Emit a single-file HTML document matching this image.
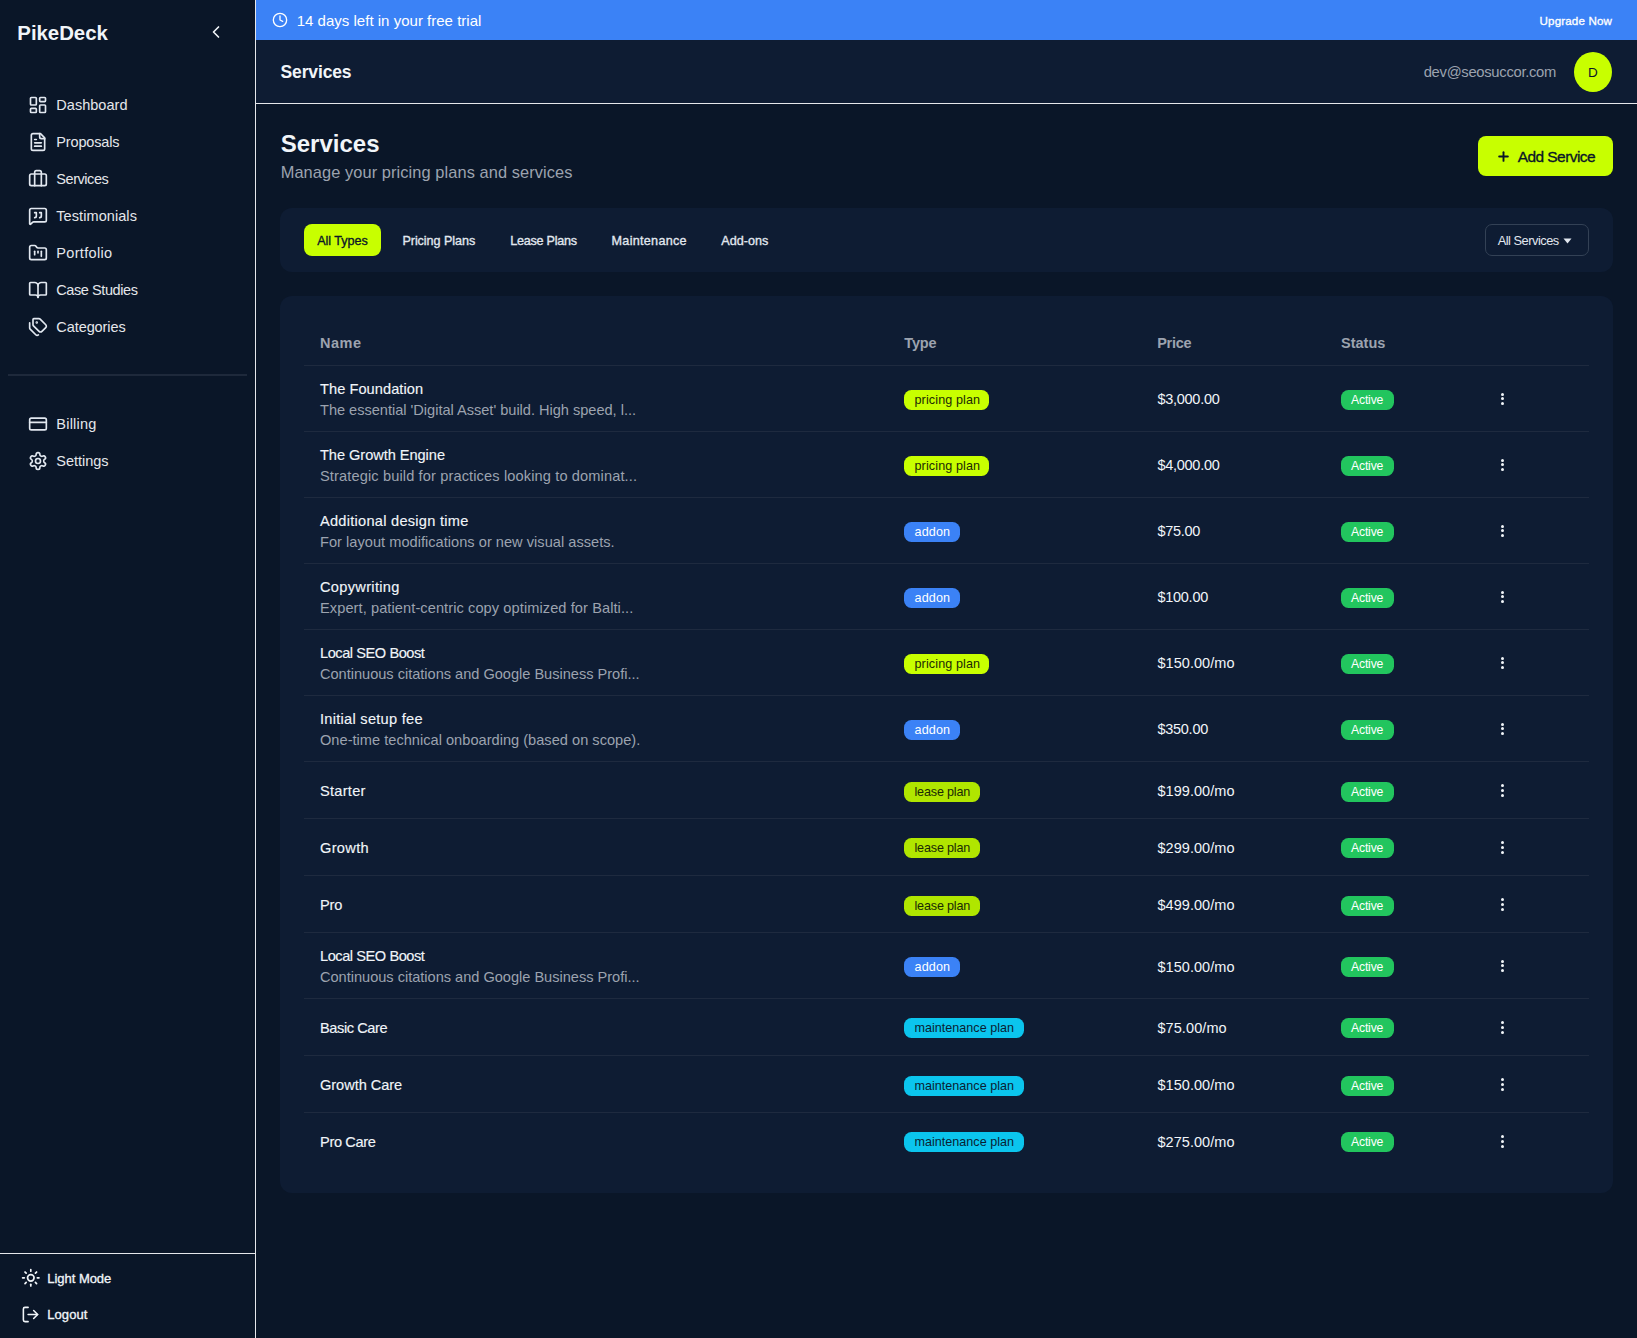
<!DOCTYPE html>
<html><head><meta charset="utf-8"><title>Services</title>
<style>
html,body{margin:0;padding:0;}
body{width:1637px;height:1338px;overflow:hidden;position:relative;background:#0a1628;font-family:"Liberation Sans",sans-serif;}
.t{position:absolute;line-height:1;white-space:nowrap;}
.b{position:absolute;}
</style></head><body>
<div class="b" style="left:0px;top:0px;width:255px;height:1338px;background:#0a1628;"></div>
<div class="b" style="left:255px;top:0px;width:1px;height:1338px;background:#e5e7eb;"></div>
<div class="t" style="left:17.3px;top:23.00px;font-size:20.4px;font-weight:700;color:#f1f5f9;letter-spacing:-0.019px;">PikeDeck</div>
<svg class="b" style="left:206px;top:22px;color:#f1f5f9;" width="20" height="20" viewBox="0 0 24 24" fill="none" stroke="#f1f5f9" stroke-width="2" stroke-linecap="round" stroke-linejoin="round"><path d="m15 18-6-6 6-6"/></svg>
<svg class="b" style="left:28px;top:95px;color:#e2e8f0;" width="20" height="20" viewBox="0 0 24 24" fill="none" stroke="#e2e8f0" stroke-width="2" stroke-linecap="round" stroke-linejoin="round"><rect width="7" height="9" x="3" y="3" rx="1"/><rect width="7" height="5" x="14" y="3" rx="1"/><rect width="7" height="9" x="14" y="12" rx="1"/><rect width="7" height="5" x="3" y="16" rx="1"/></svg>
<div class="t" style="left:56.3px;top:98.00px;font-size:14.5px;color:#e5e7eb;letter-spacing:0.03px;">Dashboard</div>
<svg class="b" style="left:28px;top:132px;color:#e2e8f0;" width="20" height="20" viewBox="0 0 24 24" fill="none" stroke="#e2e8f0" stroke-width="2" stroke-linecap="round" stroke-linejoin="round"><path d="M15 2H6a2 2 0 0 0-2 2v16a2 2 0 0 0 2 2h12a2 2 0 0 0 2-2V7Z"/><path d="M14 2v4a2 2 0 0 0 2 2h4"/><path d="M10 9H8"/><path d="M16 13H8"/><path d="M16 17H8"/></svg>
<div class="t" style="left:56.3px;top:135.00px;font-size:14.5px;color:#e5e7eb;letter-spacing:-0.154px;">Proposals</div>
<svg class="b" style="left:28px;top:169px;color:#e2e8f0;" width="20" height="20" viewBox="0 0 24 24" fill="none" stroke="#e2e8f0" stroke-width="2" stroke-linecap="round" stroke-linejoin="round"><path d="M16 20V4a2 2 0 0 0-2-2h-4a2 2 0 0 0-2 2v16"/><rect width="20" height="14" x="2" y="6" rx="2"/></svg>
<div class="t" style="left:56.3px;top:172.00px;font-size:14.5px;color:#e5e7eb;letter-spacing:-0.449px;">Services</div>
<svg class="b" style="left:28px;top:206px;color:#e2e8f0;" width="20" height="20" viewBox="0 0 24 24" fill="none" stroke="#e2e8f0" stroke-width="2" stroke-linecap="round" stroke-linejoin="round"><path d="M14 14a2 2 0 0 0 2-2V8h-2"/><path d="M22 17a2 2 0 0 1-2 2H6.828a2 2 0 0 0-1.414.586l-2.202 2.202A.71.71 0 0 1 2 21.286V5a2 2 0 0 1 2-2h16a2 2 0 0 1 2 2z"/><path d="M8 14a2 2 0 0 0 2-2V8H8"/></svg>
<div class="t" style="left:56.3px;top:209.00px;font-size:14.5px;color:#e5e7eb;letter-spacing:0.075px;">Testimonials</div>
<svg class="b" style="left:28px;top:243px;color:#e2e8f0;" width="20" height="20" viewBox="0 0 24 24" fill="none" stroke="#e2e8f0" stroke-width="2" stroke-linecap="round" stroke-linejoin="round"><path d="M4 20h16a2 2 0 0 0 2-2V8a2 2 0 0 0-2-2h-7.93a2 2 0 0 1-1.66-.9l-.82-1.2A2 2 0 0 0 7.93 3H4a2 2 0 0 0-2 2v13c0 1.1.9 2 2 2Z"/><path d="M8 10v4"/><path d="M12 10v2"/><path d="M16 10v6"/></svg>
<div class="t" style="left:56.3px;top:246.00px;font-size:14.5px;color:#e5e7eb;letter-spacing:0.319px;">Portfolio</div>
<svg class="b" style="left:28px;top:280px;color:#e2e8f0;" width="20" height="20" viewBox="0 0 24 24" fill="none" stroke="#e2e8f0" stroke-width="2" stroke-linecap="round" stroke-linejoin="round"><path d="M12 7v14"/><path d="M3 18a1 1 0 0 1-1-1V4a1 1 0 0 1 1-1h5a4 4 0 0 1 4 4 4 4 0 0 1 4-4h5a1 1 0 0 1 1 1v13a1 1 0 0 1-1 1h-6a3 3 0 0 0-3 3 3 3 0 0 0-3-3z"/></svg>
<div class="t" style="left:56.3px;top:283.00px;font-size:14.5px;color:#e5e7eb;letter-spacing:-0.415px;">Case Studies</div>
<svg class="b" style="left:28px;top:317px;color:#e2e8f0;" width="20" height="20" viewBox="0 0 24 24" fill="none" stroke="#e2e8f0" stroke-width="2" stroke-linecap="round" stroke-linejoin="round"><path d="M13.172 2a2 2 0 0 1 1.414.586l6.71 6.71a2.4 2.4 0 0 1 0 3.408l-4.592 4.592a2.4 2.4 0 0 1-3.408 0l-6.71-6.71A2 2 0 0 1 6 9.172V3a1 1 0 0 1 1-1z"/><path d="M2 7v6.172a2 2 0 0 0 .586 1.414l6.71 6.71a2.4 2.4 0 0 0 3.191.193"/><circle cx="10.5" cy="6.5" r=".5" fill="currentColor"/></svg>
<div class="t" style="left:56.3px;top:320.00px;font-size:14.5px;color:#e5e7eb;letter-spacing:-0.073px;">Categories</div>
<div class="b" style="left:8px;top:374px;width:239px;height:2px;background:#1e293b;"></div>
<svg class="b" style="left:28px;top:414px;color:#e2e8f0;" width="20" height="20" viewBox="0 0 24 24" fill="none" stroke="#e2e8f0" stroke-width="2" stroke-linecap="round" stroke-linejoin="round"><rect width="20" height="14" x="2" y="5" rx="2"/><line x1="2" x2="22" y1="10" y2="10"/></svg>
<div class="t" style="left:56.3px;top:417.00px;font-size:14.5px;color:#e5e7eb;letter-spacing:0.232px;">Billing</div>
<svg class="b" style="left:28px;top:451px;color:#e2e8f0;" width="20" height="20" viewBox="0 0 24 24" fill="none" stroke="#e2e8f0" stroke-width="2" stroke-linecap="round" stroke-linejoin="round"><path d="M12.22 2h-.44a2 2 0 0 0-2 2v.18a2 2 0 0 1-1 1.73l-.43.25a2 2 0 0 1-2 0l-.15-.08a2 2 0 0 0-2.73.73l-.22.38a2 2 0 0 0 .73 2.73l.15.1a2 2 0 0 1 1 1.72v.51a2 2 0 0 1-1 1.74l-.15.09a2 2 0 0 0-.73 2.73l.22.38a2 2 0 0 0 2.73.73l.15-.08a2 2 0 0 1 2 0l.43.25a2 2 0 0 1 1 1.73V20a2 2 0 0 0 2 2h.44a2 2 0 0 0 2-2v-.18a2 2 0 0 1 1-1.73l.43-.25a2 2 0 0 1 2 0l.15.08a2 2 0 0 0 2.73-.73l.22-.39a2 2 0 0 0-.73-2.73l-.15-.08a2 2 0 0 1-1-1.74v-.5a2 2 0 0 1 1-1.74l.15-.09a2 2 0 0 0 .73-2.73l-.22-.38a2 2 0 0 0-2.73-.73l-.15.08a2 2 0 0 1-2 0l-.43-.25a2 2 0 0 1-1-1.73V4a2 2 0 0 0-2-2z"/><circle cx="12" cy="12" r="3"/></svg>
<div class="t" style="left:56.3px;top:454.00px;font-size:14.5px;color:#e5e7eb;letter-spacing:-0.01px;">Settings</div>
<div class="b" style="left:0px;top:1253px;width:255px;height:1px;background:#e5e7eb;"></div>
<svg class="b" style="left:20.9px;top:1267.8px;color:#f1f5f9;" width="19.6" height="19.6" viewBox="0 0 24 24" fill="none" stroke="#f1f5f9" stroke-width="2.1" stroke-linecap="round" stroke-linejoin="round"><circle cx="12" cy="12" r="4"/><path d="M12 2v2"/><path d="M12 20v2"/><path d="m4.93 4.93 1.41 1.41"/><path d="m17.66 17.66 1.41 1.41"/><path d="M2 12h2"/><path d="M20 12h2"/><path d="m6.34 17.66-1.41 1.41"/><path d="m19.07 4.93-1.41 1.41"/></svg>
<div class="t" style="left:47.3px;top:1272.00px;font-size:13px;-webkit-text-stroke:0.32px #f1f5f9;color:#f1f5f9;letter-spacing:-0.036px;">Light Mode</div>
<svg class="b" style="left:21.2px;top:1304.6px;color:#f1f5f9;" width="19" height="19" viewBox="0 0 24 24" fill="none" stroke="#f1f5f9" stroke-width="2" stroke-linecap="round" stroke-linejoin="round"><path d="M9 21H5a2 2 0 0 1-2-2V5a2 2 0 0 1 2-2h4"/><polyline points="16 17 21 12 16 7"/><line x1="21" x2="9" y1="12" y2="12"/></svg>
<div class="t" style="left:47.3px;top:1308.00px;font-size:13px;-webkit-text-stroke:0.32px #f1f5f9;color:#f1f5f9;letter-spacing:0.048px;">Logout</div>
<div class="b" style="left:256px;top:0px;width:1381px;height:40px;background:#3b82f6;"></div>
<svg class="b" style="left:271.5px;top:12px;color:#ffffff;" width="16" height="16" viewBox="0 0 24 24" fill="none" stroke="#ffffff" stroke-width="2" stroke-linecap="round" stroke-linejoin="round"><circle cx="12" cy="12" r="10"/><polyline points="12 6 12 12 16 14"/></svg>
<div class="t" style="left:296.7px;top:13.00px;font-size:15px;color:#ffffff;letter-spacing:0.015px;">14 days left in your free trial</div>
<div class="t" style="left:1539.6px;top:15.00px;font-size:11.6px;-webkit-text-stroke:0.32px #ffffff;color:#ffffff;letter-spacing:0.137px;">Upgrade Now</div>
<div class="b" style="left:256px;top:40px;width:1381px;height:63px;background:#0e1c33;"></div>
<div class="b" style="left:256px;top:103px;width:1381px;height:1px;background:#e5e7eb;"></div>
<div class="t" style="left:280.5px;top:64.00px;font-size:17.5px;font-weight:700;color:#f1f5f9;letter-spacing:-0.13px;">Services</div>
<div class="t" style="left:1423.7px;top:65.00px;font-size:14.8px;color:#9ca3af;letter-spacing:-0.306px;">dev@seosuccor.com</div>
<div class="b" style="left:1574px;top:52px;width:38px;height:40px;background:#c8ff00;border-radius:50%;"></div>
<div class="t" style="left:1588.1px;top:66.00px;font-size:13.5px;color:#0a1628;">D</div>
<div class="t" style="left:280.7px;top:132.00px;font-size:24px;font-weight:700;color:#f1f5f9;letter-spacing:0.006px;">Services</div>
<div class="t" style="left:280.7px;top:164.00px;font-size:16.4px;color:#9ca3af;letter-spacing:0.079px;">Manage your pricing plans and services</div>
<div class="b" style="left:1478px;top:136px;width:135px;height:40px;background:#c8ff00;border-radius:8px;"></div>
<svg class="b" style="left:1495.5px;top:148.7px;color:#0a1628;" width="15" height="15" viewBox="0 0 24 24" fill="none" stroke="#0a1628" stroke-width="3" stroke-linecap="round" stroke-linejoin="round"><path d="M5 12h14"/><path d="M12 5v14"/></svg>
<div class="t" style="left:1517.7px;top:149.00px;font-size:15.5px;-webkit-text-stroke:0.32px #0a1628;color:#0a1628;letter-spacing:-0.567px;">Add Service</div>
<div class="b" style="left:280px;top:208px;width:1333px;height:64px;background:#0e1c33;border-radius:12px;"></div>
<div class="b" style="left:304px;top:224px;width:77px;height:32px;background:#c8ff00;border-radius:8px;"></div>
<div class="t" style="left:317.2px;top:235.00px;font-size:12.6px;-webkit-text-stroke:0.32px #0a1628;color:#0a1628;letter-spacing:-0.037px;">All Types</div>
<div class="t" style="left:402.4px;top:235.00px;font-size:12.6px;-webkit-text-stroke:0.32px #e2e8f0;color:#e2e8f0;letter-spacing:-0.053px;">Pricing Plans</div>
<div class="t" style="left:510.3px;top:235.00px;font-size:12.6px;-webkit-text-stroke:0.32px #e2e8f0;color:#e2e8f0;letter-spacing:-0.265px;">Lease Plans</div>
<div class="t" style="left:611.6px;top:235.00px;font-size:12.6px;-webkit-text-stroke:0.32px #e2e8f0;color:#e2e8f0;letter-spacing:0.285px;">Maintenance</div>
<div class="t" style="left:721.2px;top:235.00px;font-size:12.6px;-webkit-text-stroke:0.32px #e2e8f0;color:#e2e8f0;letter-spacing:0.045px;">Add-ons</div>
<div class="b" style="left:1485px;top:224px;width:104px;height:32px;background:transparent;border-radius:7px;box-sizing:border-box;border:1px solid #334155;"></div>
<div class="t" style="left:1497.7px;top:235.00px;font-size:12.8px;color:#e2e8f0;letter-spacing:-0.479px;">All Services</div>
<svg class="b" style="left:1563px;top:238px" width="9" height="6" viewBox="0 0 9 6"><path d="M0.5 0.5h8L4.5 5.5z" fill="#e2e8f0"/></svg>
<div class="b" style="left:280px;top:296px;width:1333px;height:897px;background:#0e1c33;border-radius:12px;"></div>
<div class="t" style="left:320px;top:336.00px;font-size:14.5px;font-weight:700;color:#9ca3af;letter-spacing:0.502px;">Name</div>
<div class="t" style="left:904.2px;top:336.00px;font-size:14.5px;font-weight:700;color:#9ca3af;letter-spacing:-0.089px;">Type</div>
<div class="t" style="left:1157.2px;top:336.00px;font-size:14.5px;font-weight:700;color:#9ca3af;letter-spacing:-0.268px;">Price</div>
<div class="t" style="left:1341px;top:336.00px;font-size:14.5px;font-weight:700;color:#9ca3af;letter-spacing:-0.003px;">Status</div>
<div class="b" style="left:304px;top:365px;width:1285px;height:1px;background:#1e2a3f;"></div>
<div class="t" style="left:320px;top:382.00px;font-size:14.6px;-webkit-text-stroke:0.14px #f1f5f9;color:#f1f5f9;letter-spacing:0.064px;">The Foundation</div>
<div class="t" style="left:320px;top:403.00px;font-size:14.6px;color:#9ca3af;letter-spacing:-0.02px;">The essential &#x27;Digital Asset&#x27; build. High speed, l...</div>
<div class="b" style="left:904px;top:390px;width:85px;height:20px;background:#c8ff00;border-radius:7.5px;"></div>
<div class="t" style="left:914.5px;top:394.00px;font-size:12.6px;color:#1a2a05;letter-spacing:0.109px;">pricing plan</div>
<div class="t" style="left:1157.4px;top:392.00px;font-size:14.5px;color:#f1f5f9;letter-spacing:-0.261px;">$3,000.00</div>
<div class="b" style="left:1341px;top:390px;width:53px;height:20px;background:#22c55e;border-radius:7.5px;"></div>
<div class="t" style="left:1351px;top:394.00px;font-size:12.2px;color:#ffffff;letter-spacing:-0.165px;">Active</div>
<div class="b" style="left:1501.0px;top:392.75px;width:3px;height:3px;background:#f1f5f9;border-radius:2px;"></div>
<div class="b" style="left:1501.0px;top:397.4px;width:3px;height:3px;background:#f1f5f9;border-radius:2px;"></div>
<div class="b" style="left:1501.0px;top:402.04999999999995px;width:3px;height:3px;background:#f1f5f9;border-radius:2px;"></div>
<div class="b" style="left:304px;top:431px;width:1285px;height:1px;background:#1e2a3f;"></div>
<div class="t" style="left:320px;top:448.00px;font-size:14.6px;-webkit-text-stroke:0.14px #f1f5f9;color:#f1f5f9;letter-spacing:-0.046px;">The Growth Engine</div>
<div class="t" style="left:320px;top:469.00px;font-size:14.6px;color:#9ca3af;letter-spacing:0.127px;">Strategic build for practices looking to dominat...</div>
<div class="b" style="left:904px;top:456px;width:85px;height:20px;background:#c8ff00;border-radius:7.5px;"></div>
<div class="t" style="left:914.5px;top:460.00px;font-size:12.6px;color:#1a2a05;letter-spacing:0.109px;">pricing plan</div>
<div class="t" style="left:1157.4px;top:458.00px;font-size:14.5px;color:#f1f5f9;letter-spacing:-0.261px;">$4,000.00</div>
<div class="b" style="left:1341px;top:456px;width:53px;height:20px;background:#22c55e;border-radius:7.5px;"></div>
<div class="t" style="left:1351px;top:460.00px;font-size:12.2px;color:#ffffff;letter-spacing:-0.165px;">Active</div>
<div class="b" style="left:1501.0px;top:458.75px;width:3px;height:3px;background:#f1f5f9;border-radius:2px;"></div>
<div class="b" style="left:1501.0px;top:463.4px;width:3px;height:3px;background:#f1f5f9;border-radius:2px;"></div>
<div class="b" style="left:1501.0px;top:468.04999999999995px;width:3px;height:3px;background:#f1f5f9;border-radius:2px;"></div>
<div class="b" style="left:304px;top:497px;width:1285px;height:1px;background:#1e2a3f;"></div>
<div class="t" style="left:320px;top:514.00px;font-size:14.6px;-webkit-text-stroke:0.14px #f1f5f9;color:#f1f5f9;letter-spacing:0.261px;">Additional design time</div>
<div class="t" style="left:320px;top:535.00px;font-size:14.6px;color:#9ca3af;letter-spacing:0.023px;">For layout modifications or new visual assets.</div>
<div class="b" style="left:904px;top:522px;width:56px;height:20px;background:#3b82f6;border-radius:7.5px;"></div>
<div class="t" style="left:914.5px;top:526.00px;font-size:12.6px;color:#ffffff;letter-spacing:0.121px;">addon</div>
<div class="t" style="left:1157.4px;top:524.00px;font-size:14.5px;color:#f1f5f9;letter-spacing:-0.268px;">$75.00</div>
<div class="b" style="left:1341px;top:522px;width:53px;height:20px;background:#22c55e;border-radius:7.5px;"></div>
<div class="t" style="left:1351px;top:526.00px;font-size:12.2px;color:#ffffff;letter-spacing:-0.165px;">Active</div>
<div class="b" style="left:1501.0px;top:524.75px;width:3px;height:3px;background:#f1f5f9;border-radius:2px;"></div>
<div class="b" style="left:1501.0px;top:529.4px;width:3px;height:3px;background:#f1f5f9;border-radius:2px;"></div>
<div class="b" style="left:1501.0px;top:534.05px;width:3px;height:3px;background:#f1f5f9;border-radius:2px;"></div>
<div class="b" style="left:304px;top:563px;width:1285px;height:1px;background:#1e2a3f;"></div>
<div class="t" style="left:320px;top:580.00px;font-size:14.6px;-webkit-text-stroke:0.14px #f1f5f9;color:#f1f5f9;letter-spacing:0.311px;">Copywriting</div>
<div class="t" style="left:320px;top:601.00px;font-size:14.6px;color:#9ca3af;letter-spacing:0.085px;">Expert, patient-centric copy optimized for Balti...</div>
<div class="b" style="left:904px;top:588px;width:56px;height:20px;background:#3b82f6;border-radius:7.5px;"></div>
<div class="t" style="left:914.5px;top:592.00px;font-size:12.6px;color:#ffffff;letter-spacing:0.121px;">addon</div>
<div class="t" style="left:1157.4px;top:590.00px;font-size:14.5px;color:#f1f5f9;letter-spacing:-0.256px;">$100.00</div>
<div class="b" style="left:1341px;top:588px;width:53px;height:20px;background:#22c55e;border-radius:7.5px;"></div>
<div class="t" style="left:1351px;top:592.00px;font-size:12.2px;color:#ffffff;letter-spacing:-0.165px;">Active</div>
<div class="b" style="left:1501.0px;top:590.75px;width:3px;height:3px;background:#f1f5f9;border-radius:2px;"></div>
<div class="b" style="left:1501.0px;top:595.4px;width:3px;height:3px;background:#f1f5f9;border-radius:2px;"></div>
<div class="b" style="left:1501.0px;top:600.05px;width:3px;height:3px;background:#f1f5f9;border-radius:2px;"></div>
<div class="b" style="left:304px;top:629px;width:1285px;height:1px;background:#1e2a3f;"></div>
<div class="t" style="left:320px;top:646.00px;font-size:14.6px;-webkit-text-stroke:0.14px #f1f5f9;color:#f1f5f9;letter-spacing:-0.444px;">Local SEO Boost</div>
<div class="t" style="left:320px;top:667.00px;font-size:14.6px;color:#9ca3af;letter-spacing:-0.019px;">Continuous citations and Google Business Profi...</div>
<div class="b" style="left:904px;top:654px;width:85px;height:20px;background:#c8ff00;border-radius:7.5px;"></div>
<div class="t" style="left:914.5px;top:658.00px;font-size:12.6px;color:#1a2a05;letter-spacing:0.109px;">pricing plan</div>
<div class="t" style="left:1157.4px;top:656.00px;font-size:14.5px;color:#f1f5f9;letter-spacing:0.064px;">$150.00/mo</div>
<div class="b" style="left:1341px;top:654px;width:53px;height:20px;background:#22c55e;border-radius:7.5px;"></div>
<div class="t" style="left:1351px;top:658.00px;font-size:12.2px;color:#ffffff;letter-spacing:-0.165px;">Active</div>
<div class="b" style="left:1501.0px;top:656.75px;width:3px;height:3px;background:#f1f5f9;border-radius:2px;"></div>
<div class="b" style="left:1501.0px;top:661.4px;width:3px;height:3px;background:#f1f5f9;border-radius:2px;"></div>
<div class="b" style="left:1501.0px;top:666.05px;width:3px;height:3px;background:#f1f5f9;border-radius:2px;"></div>
<div class="b" style="left:304px;top:695px;width:1285px;height:1px;background:#1e2a3f;"></div>
<div class="t" style="left:320px;top:712.00px;font-size:14.6px;-webkit-text-stroke:0.14px #f1f5f9;color:#f1f5f9;letter-spacing:0.274px;">Initial setup fee</div>
<div class="t" style="left:320px;top:733.00px;font-size:14.6px;color:#9ca3af;letter-spacing:0.014px;">One-time technical onboarding (based on scope).</div>
<div class="b" style="left:904px;top:720px;width:56px;height:20px;background:#3b82f6;border-radius:7.5px;"></div>
<div class="t" style="left:914.5px;top:724.00px;font-size:12.6px;color:#ffffff;letter-spacing:0.121px;">addon</div>
<div class="t" style="left:1157.4px;top:722.00px;font-size:14.5px;color:#f1f5f9;letter-spacing:-0.256px;">$350.00</div>
<div class="b" style="left:1341px;top:720px;width:53px;height:20px;background:#22c55e;border-radius:7.5px;"></div>
<div class="t" style="left:1351px;top:724.00px;font-size:12.2px;color:#ffffff;letter-spacing:-0.165px;">Active</div>
<div class="b" style="left:1501.0px;top:722.75px;width:3px;height:3px;background:#f1f5f9;border-radius:2px;"></div>
<div class="b" style="left:1501.0px;top:727.4px;width:3px;height:3px;background:#f1f5f9;border-radius:2px;"></div>
<div class="b" style="left:1501.0px;top:732.05px;width:3px;height:3px;background:#f1f5f9;border-radius:2px;"></div>
<div class="b" style="left:304px;top:761px;width:1285px;height:1px;background:#1e2a3f;"></div>
<div class="t" style="left:320px;top:784.00px;font-size:14.6px;-webkit-text-stroke:0.14px #f1f5f9;color:#f1f5f9;letter-spacing:0.277px;">Starter</div>
<div class="b" style="left:904px;top:782px;width:76px;height:20px;background:#b0e600;border-radius:7.5px;"></div>
<div class="t" style="left:914.5px;top:786.00px;font-size:12.6px;color:#1a2a05;letter-spacing:-0.179px;">lease plan</div>
<div class="t" style="left:1157.4px;top:784.00px;font-size:14.5px;color:#f1f5f9;letter-spacing:0.064px;">$199.00/mo</div>
<div class="b" style="left:1341px;top:782px;width:53px;height:20px;background:#22c55e;border-radius:7.5px;"></div>
<div class="t" style="left:1351px;top:786.00px;font-size:12.2px;color:#ffffff;letter-spacing:-0.165px;">Active</div>
<div class="b" style="left:1501.0px;top:784.25px;width:3px;height:3px;background:#f1f5f9;border-radius:2px;"></div>
<div class="b" style="left:1501.0px;top:788.9px;width:3px;height:3px;background:#f1f5f9;border-radius:2px;"></div>
<div class="b" style="left:1501.0px;top:793.55px;width:3px;height:3px;background:#f1f5f9;border-radius:2px;"></div>
<div class="b" style="left:304px;top:818px;width:1285px;height:1px;background:#1e2a3f;"></div>
<div class="t" style="left:320px;top:841.00px;font-size:14.6px;-webkit-text-stroke:0.14px #f1f5f9;color:#f1f5f9;letter-spacing:0.319px;">Growth</div>
<div class="b" style="left:904px;top:838px;width:76px;height:20px;background:#b0e600;border-radius:7.5px;"></div>
<div class="t" style="left:914.5px;top:842.00px;font-size:12.6px;color:#1a2a05;letter-spacing:-0.179px;">lease plan</div>
<div class="t" style="left:1157.4px;top:841.00px;font-size:14.5px;color:#f1f5f9;letter-spacing:0.064px;">$299.00/mo</div>
<div class="b" style="left:1341px;top:838px;width:53px;height:20px;background:#22c55e;border-radius:7.5px;"></div>
<div class="t" style="left:1351px;top:842.00px;font-size:12.2px;color:#ffffff;letter-spacing:-0.165px;">Active</div>
<div class="b" style="left:1501.0px;top:841.25px;width:3px;height:3px;background:#f1f5f9;border-radius:2px;"></div>
<div class="b" style="left:1501.0px;top:845.9px;width:3px;height:3px;background:#f1f5f9;border-radius:2px;"></div>
<div class="b" style="left:1501.0px;top:850.55px;width:3px;height:3px;background:#f1f5f9;border-radius:2px;"></div>
<div class="b" style="left:304px;top:875px;width:1285px;height:1px;background:#1e2a3f;"></div>
<div class="t" style="left:320px;top:898.00px;font-size:14.6px;-webkit-text-stroke:0.14px #f1f5f9;color:#f1f5f9;letter-spacing:-0.19px;">Pro</div>
<div class="b" style="left:904px;top:896px;width:76px;height:20px;background:#b0e600;border-radius:7.5px;"></div>
<div class="t" style="left:914.5px;top:900.00px;font-size:12.6px;color:#1a2a05;letter-spacing:-0.179px;">lease plan</div>
<div class="t" style="left:1157.4px;top:898.00px;font-size:14.5px;color:#f1f5f9;letter-spacing:0.064px;">$499.00/mo</div>
<div class="b" style="left:1341px;top:896px;width:53px;height:20px;background:#22c55e;border-radius:7.5px;"></div>
<div class="t" style="left:1351px;top:900.00px;font-size:12.2px;color:#ffffff;letter-spacing:-0.165px;">Active</div>
<div class="b" style="left:1501.0px;top:898.25px;width:3px;height:3px;background:#f1f5f9;border-radius:2px;"></div>
<div class="b" style="left:1501.0px;top:902.9px;width:3px;height:3px;background:#f1f5f9;border-radius:2px;"></div>
<div class="b" style="left:1501.0px;top:907.55px;width:3px;height:3px;background:#f1f5f9;border-radius:2px;"></div>
<div class="b" style="left:304px;top:932px;width:1285px;height:1px;background:#1e2a3f;"></div>
<div class="t" style="left:320px;top:949.00px;font-size:14.6px;-webkit-text-stroke:0.14px #f1f5f9;color:#f1f5f9;letter-spacing:-0.444px;">Local SEO Boost</div>
<div class="t" style="left:320px;top:970.00px;font-size:14.6px;color:#9ca3af;letter-spacing:-0.019px;">Continuous citations and Google Business Profi...</div>
<div class="b" style="left:904px;top:957px;width:56px;height:20px;background:#3b82f6;border-radius:7.5px;"></div>
<div class="t" style="left:914.5px;top:961.00px;font-size:12.6px;color:#ffffff;letter-spacing:0.121px;">addon</div>
<div class="t" style="left:1157.4px;top:960.00px;font-size:14.5px;color:#f1f5f9;letter-spacing:0.064px;">$150.00/mo</div>
<div class="b" style="left:1341px;top:957px;width:53px;height:20px;background:#22c55e;border-radius:7.5px;"></div>
<div class="t" style="left:1351px;top:961.00px;font-size:12.2px;color:#ffffff;letter-spacing:-0.165px;">Active</div>
<div class="b" style="left:1501.0px;top:959.75px;width:3px;height:3px;background:#f1f5f9;border-radius:2px;"></div>
<div class="b" style="left:1501.0px;top:964.4px;width:3px;height:3px;background:#f1f5f9;border-radius:2px;"></div>
<div class="b" style="left:1501.0px;top:969.05px;width:3px;height:3px;background:#f1f5f9;border-radius:2px;"></div>
<div class="b" style="left:304px;top:998px;width:1285px;height:1px;background:#1e2a3f;"></div>
<div class="t" style="left:320px;top:1021.00px;font-size:14.6px;-webkit-text-stroke:0.14px #f1f5f9;color:#f1f5f9;letter-spacing:-0.422px;">Basic Care</div>
<div class="b" style="left:904px;top:1018px;width:120px;height:20px;background:#0bc5ee;border-radius:7.5px;"></div>
<div class="t" style="left:914.5px;top:1022.00px;font-size:12.6px;color:#0a1e33;letter-spacing:0.007px;">maintenance plan</div>
<div class="t" style="left:1157.4px;top:1021.00px;font-size:14.5px;color:#f1f5f9;letter-spacing:0.096px;">$75.00/mo</div>
<div class="b" style="left:1341px;top:1018px;width:53px;height:20px;background:#22c55e;border-radius:7.5px;"></div>
<div class="t" style="left:1351px;top:1022.00px;font-size:12.2px;color:#ffffff;letter-spacing:-0.165px;">Active</div>
<div class="b" style="left:1501.0px;top:1021.2500000000001px;width:3px;height:3px;background:#f1f5f9;border-radius:2px;"></div>
<div class="b" style="left:1501.0px;top:1025.9px;width:3px;height:3px;background:#f1f5f9;border-radius:2px;"></div>
<div class="b" style="left:1501.0px;top:1030.5500000000002px;width:3px;height:3px;background:#f1f5f9;border-radius:2px;"></div>
<div class="b" style="left:304px;top:1055px;width:1285px;height:1px;background:#1e2a3f;"></div>
<div class="t" style="left:320px;top:1078.00px;font-size:14.6px;-webkit-text-stroke:0.14px #f1f5f9;color:#f1f5f9;letter-spacing:-0.052px;">Growth Care</div>
<div class="b" style="left:904px;top:1076px;width:120px;height:20px;background:#0bc5ee;border-radius:7.5px;"></div>
<div class="t" style="left:914.5px;top:1080.00px;font-size:12.6px;color:#0a1e33;letter-spacing:0.007px;">maintenance plan</div>
<div class="t" style="left:1157.4px;top:1078.00px;font-size:14.5px;color:#f1f5f9;letter-spacing:0.064px;">$150.00/mo</div>
<div class="b" style="left:1341px;top:1076px;width:53px;height:20px;background:#22c55e;border-radius:7.5px;"></div>
<div class="t" style="left:1351px;top:1080.00px;font-size:12.2px;color:#ffffff;letter-spacing:-0.165px;">Active</div>
<div class="b" style="left:1501.0px;top:1078.25px;width:3px;height:3px;background:#f1f5f9;border-radius:2px;"></div>
<div class="b" style="left:1501.0px;top:1082.9px;width:3px;height:3px;background:#f1f5f9;border-radius:2px;"></div>
<div class="b" style="left:1501.0px;top:1087.5500000000002px;width:3px;height:3px;background:#f1f5f9;border-radius:2px;"></div>
<div class="b" style="left:304px;top:1112px;width:1285px;height:1px;background:#1e2a3f;"></div>
<div class="t" style="left:320px;top:1135.00px;font-size:14.6px;-webkit-text-stroke:0.14px #f1f5f9;color:#f1f5f9;letter-spacing:-0.356px;">Pro Care</div>
<div class="b" style="left:904px;top:1132px;width:120px;height:20px;background:#0bc5ee;border-radius:7.5px;"></div>
<div class="t" style="left:914.5px;top:1136.00px;font-size:12.6px;color:#0a1e33;letter-spacing:0.007px;">maintenance plan</div>
<div class="t" style="left:1157.4px;top:1135.00px;font-size:14.5px;color:#f1f5f9;letter-spacing:0.064px;">$275.00/mo</div>
<div class="b" style="left:1341px;top:1132px;width:53px;height:20px;background:#22c55e;border-radius:7.5px;"></div>
<div class="t" style="left:1351px;top:1136.00px;font-size:12.2px;color:#ffffff;letter-spacing:-0.165px;">Active</div>
<div class="b" style="left:1501.0px;top:1135.25px;width:3px;height:3px;background:#f1f5f9;border-radius:2px;"></div>
<div class="b" style="left:1501.0px;top:1139.9px;width:3px;height:3px;background:#f1f5f9;border-radius:2px;"></div>
<div class="b" style="left:1501.0px;top:1144.5500000000002px;width:3px;height:3px;background:#f1f5f9;border-radius:2px;"></div>
</body></html>
